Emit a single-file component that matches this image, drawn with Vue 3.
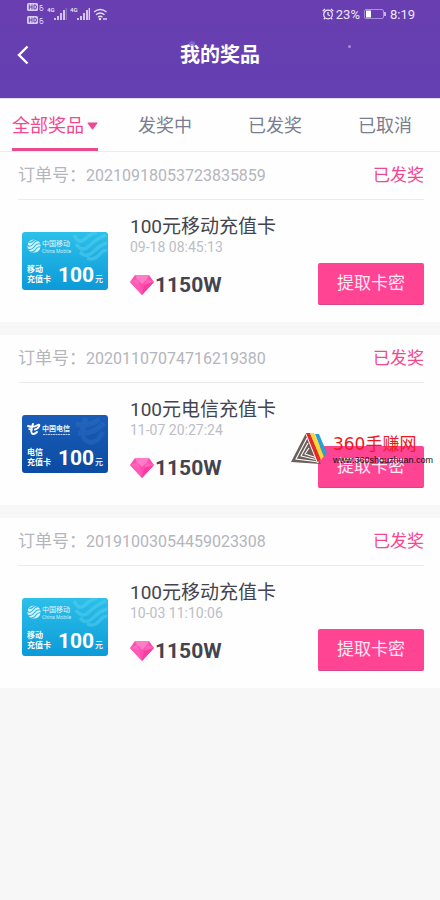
<script setup>
import { ref } from 'vue'

const tabs = ['全部奖品', '发奖中', '已发奖', '已取消']
const active = ref(0)

const orders = [
  { id: '20210918053723835859', status: '已发奖', carrier: 'mobile', title: '100元移动充值卡', time: '09-18 08:45:13', price: '1150W' },
  { id: '20201107074716219380', status: '已发奖', carrier: 'telecom', title: '100元电信充值卡', time: '11-07 20:27:24', price: '1150W' },
  { id: '20191003054459023308', status: '已发奖', carrier: 'mobile', title: '100元移动充值卡', time: '10-03 11:10:06', price: '1150W' }
]
</script>

<template>
  <div class="page">
    <header class="top">
      <div class="status">
        <div class="status-side">
          <svg class="hd" viewBox="0 0 18 24" aria-hidden="true">
            <g v-for="y in [1, 14]" :key="y">
              <rect x="0" :y="y" width="11" height="8" rx="1.5" fill="#d9cdf0" />
              <path :d="`M2.3 ${y + 1.5}v5M5 ${y + 1.5}v5M2.3 ${y + 4}h2.7M7 ${y + 2}v4h1q1.5 0 1.5-2t-1.5-2z`" fill="none" stroke="#6740b2" />
              <rect x="13" :y="y + 4.5" width="3" height="3" rx="1" fill="none" stroke="#d9cdf0" />
              <path :d="`M13 ${y + 4.5}v-2h2.5`" fill="none" stroke="#d9cdf0" />
            </g>
          </svg>
          <svg v-for="n in 2" :key="n" class="signal" viewBox="0 0 20 14" aria-hidden="true">
            <text x="0" y="5" class="net">4G</text>
            <path d="M8 11v2M11 9v4M14 6v7M17 3v10" stroke="#e4dbf5" stroke-width="1.7" />
            <path d="M19.3 1v12" stroke="#e4dbf5" stroke-width="1.3" :opacity="n === 1 ? 0.3 : 1" />
          </svg>
          <svg class="wifi" viewBox="0 0 15 14" fill="none" stroke="#e4dbf5" stroke-width="1.4" aria-hidden="true">
            <path d="M1 5q6.2-5 12.500 0M3 7.700q4.200-3.400 8.500 0M5 10.200q2.200-1.800 4.500 0" />
            <circle cx="7" cy="12" r=".6" />
            <path d="M10 12h4" />
          </svg>
        </div>
        <div class="status-side right">
          <svg class="alarm" viewBox="0 0 12 12" fill="none" stroke="#eee8fa" stroke-width="1.2" aria-hidden="true">
            <circle cx="6" cy="6.500" r="4.300" />
            <path d="M6 4v2.700l1.800 1M.7 3.200L3 1M11.300 3.200L9 1M2.800 10l-1 1.400M9.200 10l1 1.400" />
          </svg>
          <span>23%</span>
          <svg class="battery" viewBox="0 0 22 10" aria-hidden="true">
            <rect x=".5" y=".5" width="19" height="9" rx="1.500" fill="none" stroke="#a991dc" />
            <rect x="2" y="1.500" width="5" height="7" fill="#fff" />
            <path d="M21 3v4" stroke="#e4dbf5" stroke-width="1.500" />
          </svg>
          <span>8:19</span>
        </div>
      </div>
      <div class="nav">
        <button class="back" type="button" aria-label="返回">
          <svg viewBox="0 0 12 20" fill="none" stroke="#fff" stroke-width="2.400"><path d="M10.500 1.500L2 10l8.500 8.500" /></svg>
        </button>
        <h1>我的奖品</h1>
        <i class="dot large"></i>
        <i class="dot"></i>
      </div>
    </header>

    <nav class="tabs">
      <button
        v-for="(tab, i) in tabs"
        :key="tab"
        type="button"
        :class="{ active: active === i }"
        @click="active = i"
      >
        <span>{{ tab }}<svg v-if="i === 0" class="caret" viewBox="0 0 11 8" aria-hidden="true"><path d="M1 .5h9q1 0 .4.800L6.200 7q-.7.800-1.400 0L.6 1.300Q0 .5 1 .5z" fill="currentColor" /></svg></span>
      </button>
    </nav>

    <main class="list">
      <article v-for="order in orders" :key="order.id" class="order">
        <div class="order-head">
          <p>订单号：<span>{{ order.id }}</span></p>
          <strong>{{ order.status }}</strong>
        </div>
        <div class="order-body">
          <svg v-if="order.carrier === 'mobile'" class="thumb" viewBox="0 0 86 58" role="img" aria-label="移动充值卡">
            <defs>
              <linearGradient :id="'m' + order.id" x1="0" y1="0" x2="0" y2="1">
                <stop offset="0" stop-color="#2cc0ea" />
                <stop offset="1" stop-color="#0c9ad8" />
              </linearGradient>
            </defs>
            <rect width="86" height="58" rx="3" :fill="`url(#m${order.id})`" />
            <g fill="none" stroke="#67d4f1" stroke-width="3.500" opacity=".4">
              <path d="M52 3q5 10 11 4T75 0M54 12q6 9 13 2T84 3M58 20q6 7 13 0T85 11M65 26q7 3 12-3t8-4" />
            </g>
            <circle cx="12" cy="14" r="6.600" fill="#d8f4fc" />
            <path d="M5 13q3 3 6-1t6-3M6 17q3 2 6-2t6-3M9 20q3 0 5-3t5-2M7 10q2 1 4-1t4-1" fill="none" stroke="#2bb7e5" stroke-width="1.100" />
            <text x="20" y="14" class="brand">中国移动</text>
            <text x="20" y="21" class="brand-en">China Mobile</text>
            <text x="5" y="40" class="kind">移动</text>
            <text x="5" y="50" class="kind">充值卡</text>
            <text x="36" y="50" class="value">100</text>
            <text x="73" y="50" class="unit">元</text>
          </svg>
          <svg v-else class="thumb" viewBox="0 0 86 58" role="img" aria-label="电信充值卡">
            <defs>
              <linearGradient id="telecom-fill" x1="0" y1="0" x2="0" y2="1">
                <stop offset="0" stop-color="#1a5db8" />
                <stop offset="1" stop-color="#0b4ba2" />
              </linearGradient>
            </defs>
            <rect width="86" height="58" rx="3" fill="url(#telecom-fill)" />
            <path d="M54 9q15 3 23-5M64 3q-8 20 3 24 8 2 14-10M56 18q15 2 26-10" fill="none" stroke="#4e88d0" stroke-width="5" opacity=".2" />
            <g fill="none" stroke="#fff" stroke-linecap="round">
              <path d="M6 11q5 2 10-1 2-1 1 1.500-1 2.500-4 3" stroke-width="2" />
              <path d="M11 9q-3 7-1 9.500 2 1.500 5-1.500" stroke-width="2" />
              <path d="M7 14l3 1" stroke-width="1.500" />
            </g>
            <text x="20" y="16" class="brand script">中国电信</text>
            <path d="M21 19.500h27" stroke="#b5cdee" stroke-width="1" stroke-dasharray="2 .500" />
            <text x="5" y="40" class="kind">电信</text>
            <text x="5" y="50" class="kind">充值卡</text>
            <text x="36" y="50" class="value">100</text>
            <text x="73" y="50" class="unit">元</text>
          </svg>
          <div class="info">
            <h2>{{ order.title }}</h2>
            <time>{{ order.time }}</time>
            <div class="price">
              <svg viewBox="0 0 24 20" aria-hidden="true">
                <path d="M5 0h14l5 7-12 13L0 7z" fill="#ff4fae" />
                <path d="M5 0h14l-2 4-5 5-5-5z" fill="#ff7cc6" />
                <path d="M0 7l7-3 3 6z" fill="#ff68ba" />
                <path d="M24 7l-7-3-3 6z" fill="#ff62b7" />
                <path d="M0 7l10 3 2 10z" fill="#ff58b9" />
                <path d="M24 7l-10 3-2 10z" fill="#f83ca3" />
              </svg>
              <b>{{ order.price }}</b>
            </div>
          </div>
          <div class="action">
            <button type="button">提取卡密</button>
            <a v-if="order.carrier === 'telecom'" class="mark" href="#">
              <svg viewBox="0 0 36 32" aria-hidden="true">
                <path d="M15 0L0 29l30 2-3-6-9-24z" fill="#6a5f5b" />
                <path d="M16 5L5 26l23 3M17 10L10 23l17 4M18 15l-4 6 12 4" fill="none" stroke="#fff" stroke-width="1.100" />
                <path d="M14 0h5l11 26-4 4z" fill="#e32a2b" />
                <path d="M14 0h1l12 30h-1z" fill="#fff" />
                <path d="M19 0h4l10 23-3 4z" fill="#ffd633" />
                <path d="M24 1h4l8 19-3 4z" fill="#2a9fd2" />
              </svg>
              <span class="mark-text">
                <span class="mark-name"><span>360</span>手赚网</span>
                <span class="mark-url">www.360shouzhuan.com</span>
              </span>
            </a>
          </div>
        </div>
      </article>
    </main>
  </div>
</template>

<style>
body {
  margin: 0;
  background: #f7f7f8;
}
</style>

<style scoped>
.page {
  font-family: Roboto, "Noto Sans CJK SC", sans-serif;
  color: #43444f;
}
button {
  font: inherit;
  border: 0;
  padding: 0;
  background: none;
  cursor: pointer;
}
h1, h2, p {
  margin: 0;
}
.top {
  background: linear-gradient(#693eb0, #6440b2);
  padding-bottom: 16px;
}
.status {
  display: flex;
  justify-content: space-between;
  height: 28px;
  padding: 0 25px 0 27px;
  color: #eee8fa;
  font-size: 13px;
}
.status-side {
  display: flex;
  align-items: center;
}
.right {
  gap: 2px;
}
.hd {
  width: 18px;
  height: 24px;
  margin-right: 2px;
}
.signal {
  width: 20px;
  height: 14px;
  margin-right: 3px;
}
.net {
  font-size: 6px;
  font-weight: 700;
  fill: #e4dbf5;
}
.wifi {
  width: 15px;
  height: 14px;
}
.alarm {
  width: 12px;
  height: 12px;
}
.battery {
  width: 22px;
  height: 10px;
  margin: 0 2px;
}
.nav {
  position: relative;
  display: grid;
  grid-template-columns: 48px 1fr 48px;
  align-items: center;
  height: 54px;
}
.back {
  display: flex;
  padding-left: 17px;
}
.back svg {
  width: 12px;
  height: 20px;
}
h1 {
  color: #fff;
  font-size: 20px;
  font-weight: 700;
  line-height: 28px;
  text-align: center;
}
.dot {
  position: absolute;
  top: 17px;
  left: 79%;
  width: 3px;
  height: 3px;
  border-radius: 50%;
  background: #a68bdc;
}
.dot.large {
  top: 13px;
  left: 43%;
  width: 6px;
  height: 5px;
  background: #8e6fd8;
  opacity: 0.7;
}
.tabs {
  display: grid;
  grid-template-columns: repeat(4, 1fr);
  background: #fefefe;
  border-top: 1px solid #e4def0;
  border-bottom: 1px solid #ececee;
}
.tabs button {
  display: flex;
  justify-content: center;
  color: #7b7e90;
  font-size: 18px;
}
.tabs span {
  display: flex;
  align-items: center;
  line-height: 44px;
  padding-top: 5px;
  border-bottom: 3px solid transparent;
  white-space: nowrap;
}
.tabs .active {
  color: #f2478f;
}
.tabs .active span {
  border-color: #e84c8f;
}
.caret {
  width: 11px;
  height: 8px;
  margin-left: 3px;
}
.list {
  display: grid;
  gap: 13px;
}
.order {
  background: #fefefe;
}
.order-head {
  display: flex;
  justify-content: space-between;
  margin: 0 16px 0 18px;
  border-bottom: 1px solid #ebebed;
  font-size: 17px;
  line-height: 46px;
  color: #b4b5bd;
}
.order-head span {
  font-size: 16px;
}
.order-head strong {
  color: #f4488e;
  font-weight: 400;
}
.order-body {
  display: flex;
  padding: 15px 16px 17px 22px;
}
.thumb {
  flex: none;
  width: 86px;
  height: 58px;
  margin-top: 17px;
}
.brand {
  font-size: 7px;
  fill: #e4f7fd;
}
.brand.script {
  font-weight: 700;
}
.brand-en {
  font-size: 5px;
  fill: #c5eefa;
}
.kind {
  font-size: 8px;
  font-weight: 700;
  fill: #fff;
}
.value {
  font-size: 21px;
  font-weight: 700;
  fill: #fff;
}
.unit {
  font-size: 8px;
  font-weight: 500;
  fill: #fff;
}
.info {
  flex: 1;
  margin-left: 22px;
  padding-bottom: 8px;
}
h2 {
  font-size: 19px;
  font-weight: 400;
  line-height: 24px;
  white-space: nowrap;
}
time {
  display: block;
  color: #bcbdc6;
  font-size: 14px;
  line-height: 16px;
}
.price {
  display: flex;
  align-items: center;
  gap: 1px;
  margin-top: 18px;
  font-size: 21px;
  line-height: 24px;
}
.price svg {
  width: 24px;
  height: 20px;
}
.action {
  position: relative;
  align-self: flex-end;
}
.action button {
  display: block;
  padding: 0 19px;
  border-bottom: 1px solid #d94488;
  border-radius: 2px;
  background: #ff4494;
  color: #ffeaf4;
  font-size: 17px;
  line-height: 41px;
  white-space: nowrap;
}
.mark {
  position: absolute;
  top: -13px;
  right: -9px;
  display: flex;
  color: #111;
  text-decoration: none;
  white-space: nowrap;
}
.mark svg {
  width: 36px;
  height: 32px;
}
.mark-text {
  display: grid;
  margin-left: 6px;
}
.mark-name {
  color: #f01820;
  font-size: 17px;
  line-height: 22px;
}
.mark-name span {
  font-family: "DejaVu Sans", sans-serif;
}
.mark-url {
  font-family: "Liberation Sans", sans-serif;
  font-size: 9px;
  line-height: 10px;
}
</style>
